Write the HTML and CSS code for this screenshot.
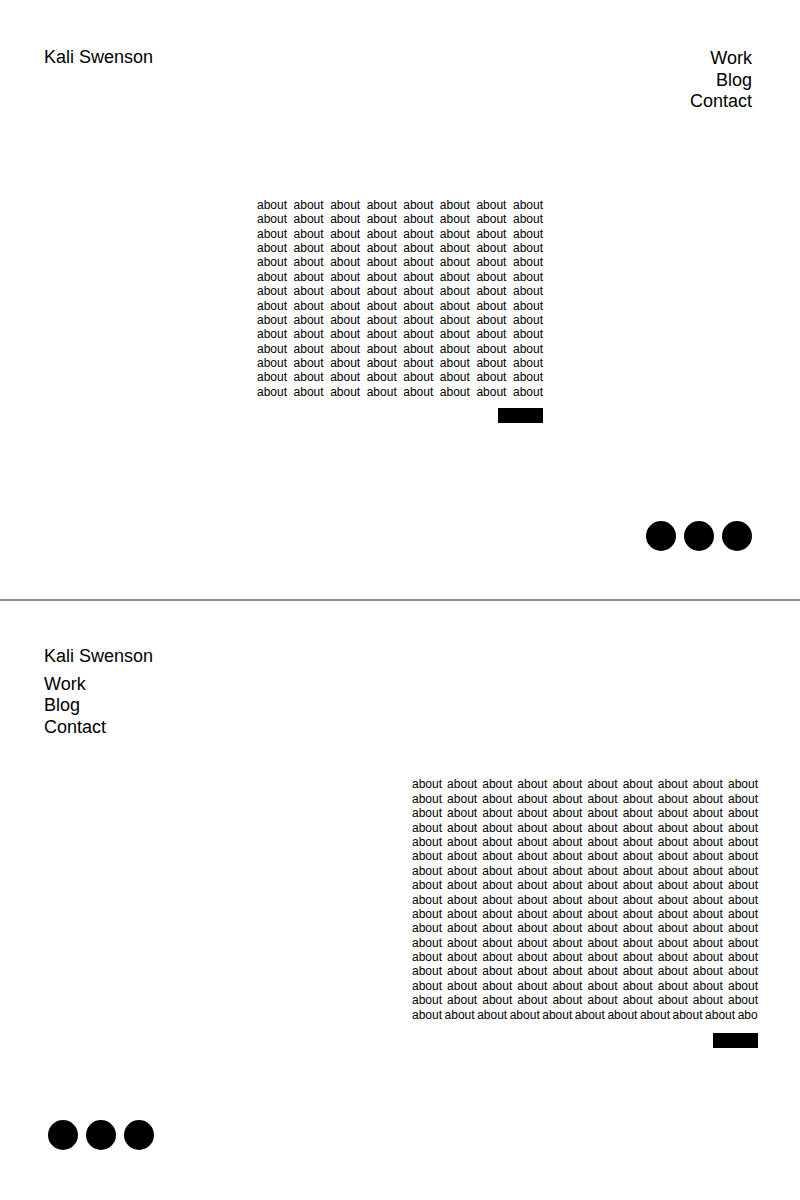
FILE: index.html
```html
<!DOCTYPE html>
<html lang="en">
<head>
    <meta charset="UTF-8">
    <meta name="viewport" content="width=device-width, initial-scale=1.0">
    <title>Kali Swenson</title>
    <link rel="stylesheet" href="styles.css">
</head>
<body>

<!-- desktop -->
<section class="frame frame-desktop">
    <header class="header">
        <div class="name">Kali Swenson</div>
        <nav class="nav">
            <a href="#">Work</a>
            <a href="#">Blog</a>
            <a href="#">Contact</a>
        </nav>
    </header>

    <div class="about">
        <p class="about-text">
            about about about about about about about about
            about about about about about about about about
            about about about about about about about about
            about about about about about about about about
            about about about about about about about about
            about about about about about about about about
            about about about about about about about about
            about about about about about about about about
            about about about about about about about about
            about about about about about about about about
            about about about about about about about about
            about about about about about about about about
            about about about about about about about about
            about about about about about about about about
        </p>
        <div class="more"></div>
    </div>

    <div class="dots">
        <span class="dot"></span>
        <span class="dot"></span>
        <span class="dot"></span>
    </div>
</section>

<!-- mobile -->
<section class="frame frame-mobile">
    <header class="header">
        <div class="name">Kali Swenson</div>
        <nav class="nav">
            <a href="#">Work</a>
            <a href="#">Blog</a>
            <a href="#">Contact</a>
        </nav>
    </header>

    <div class="about">
        <p class="about-text">
            about about about about about about about about about about
            about about about about about about about about about about
            about about about about about about about about about about
            about about about about about about about about about about
            about about about about about about about about about about
            about about about about about about about about about about
            about about about about about about about about about about
            about about about about about about about about about about
            about about about about about about about about about about
            about about about about about about about about about about
            about about about about about about about about about about
            about about about about about about about about about about
            about about about about about about about about about about
            about about about about about about about about about about
            about about about about about about about about about about
            about about about about about about about about about about
        </p>
        <div class="about-tail">about about about about about about about about about about about about</div>
        <div class="more"></div>
    </div>

    <div class="dots">
        <span class="dot"></span>
        <span class="dot"></span>
        <span class="dot"></span>
    </div>
</section>

</body>
</html>
```

FILE: styles.css
```css
body {
    margin: 0;
    padding: 0;
    background-color: #fff;
    color: #000;
    font-family: "Liberation Sans", Arial, sans-serif;
}
a {
    color: inherit;
    text-decoration: none;
}
.frame {
    box-sizing: border-box;
}
.header {
    font-size: 18px;
    line-height: 1.2;
}
.nav a {
    display: block;
}
.about-text {
    margin: 0;
    font-size: 12px;
    line-height: 1.2;
    text-align: justify;
    text-align-last: justify;
}
.more {
    width: 45px;
    height: 15px;
    background-color: #000;
    margin-left: auto;
}
.dots {
    display: flex;
    gap: 8px;
}
.dot {
    width: 30px;
    height: 30px;
    border-radius: 50%;
    background-color: #000;
}

/* desktop frame */
.frame-desktop {
    height: 601px;
    padding: 47px 48px 0 44px;
    border-bottom: 2px solid #8e8e8e;
}
.frame-desktop .header {
    display: flex;
    justify-content: space-between;
    align-items: flex-start;
}
.frame-desktop .nav {
    text-align: right;
}
.frame-desktop .nav a:first-child {
    margin-top: 1px;
}
.frame-desktop .about {
    width: 286px;
    margin: 85px 0 0 213px;
}
.frame-desktop .more {
    margin-top: 9px;
}
.frame-desktop .dots {
    justify-content: flex-end;
    margin-top: 98px;
}

/* mobile frame */
.frame-mobile {
    padding: 45px 42px 0 44px;
}
.frame-mobile .nav {
    margin-top: 6px;
}
.frame-mobile .about {
    width: 346px;
    margin: 39px 0 0 auto;
}
.frame-mobile .about-tail {
    font-size: 12px;
    line-height: 1.2;
    white-space: nowrap;
    overflow: hidden;
    word-spacing: -0.8px;
}
.frame-mobile .more {
    margin-top: 11px;
}
.frame-mobile .dots {
    margin-top: 72px;
    padding-left: 4px;
}
```
